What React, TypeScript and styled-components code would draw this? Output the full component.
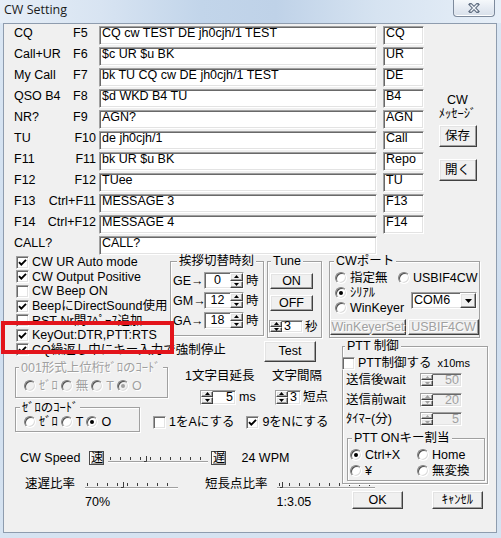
import React from 'react';
import styled, { createGlobalStyle, css } from 'styled-components';

const FONT = `"Liberation Sans", "Noto Sans CJK JP", sans-serif`;

const GlobalStyle = createGlobalStyle`
  * { box-sizing: border-box; }
  html, body { margin: 0; padding: 0; }
  body {
    width: 501px; height: 538px; overflow: hidden;
    font-family: ${FONT}; font-size: 12.5px; color: #000;
    background: #d2e0ef;
  }
`;

const sunken = css`
  border: 1px solid;
  border-color: #a0a0a0 #ffffff #ffffff #a0a0a0;
  box-shadow: inset 1px 1px 0 #696969, inset -1px -1px 0 #e3e3e3;
`;

const raised = css`
  border: 1px solid;
  border-color: #ffffff #404040 #404040 #ffffff;
  box-shadow: inset -1px -1px 0 #a0a0a0, inset 1px 1px 0 #e3e3e3;
  background: #f0f0f0;
`;

/* ---------- window chrome ---------- */
const Window = styled.div`
  width: 501px; height: 538px;
  display: flex; flex-direction: column;
  background: linear-gradient(180deg, #dbe7f4 0%, #cfdeef 55%, #d6e3f1 100%);
`;

const TitleBar = styled.div`
  height: 23px; flex: none;
  display: flex; justify-content: space-between; align-items: flex-start;
  padding: 0 6px 0 4px;
  background: linear-gradient(90deg, #e6eef7 0%, #d8e4f2 20%, #c2d5ea 40%, #bfd2e8 55%, #d6e3f1 75%, #e7eff8 100%);
`;

const Title = styled.span`
  font-family: "Open Sans", "Noto Sans", sans-serif;
  font-size: 12.5px; line-height: 16px; margin-top: 2px; color: #1b1b1b;
`;

const CloseButton = styled.div`
  width: 42px; height: 17px;
  border: 1px solid #7d8a9c; border-top: none;
  border-radius: 0 0 4px 4px;
  background: linear-gradient(180deg, #f5f8fb 0%, #e4eaf2 55%, #d8e0ea 100%);
  box-shadow: inset 0 -1px 0 #ffffff;
  display: flex; align-items: center; justify-content: center;
`;

const Client = styled.div`
  flex: 1;
  margin: 0 4px 5px 3px;
  border: 1px solid #8e9cae;
  background: #f0f0f0;
  display: flex; flex-direction: column;
`;

/* ---------- generic controls ---------- */
const Edit = styled.div<{ $w: number }>`
  ${sunken};
  width: ${p => p.$w}px; height: 19px;
  background: #fff; padding: 0 2px;
  line-height: 12px; white-space: nowrap; overflow: hidden;
`;

const Btn = styled.button<{ $w: number; $h: number; $disabled?: boolean }>`
  ${raised};
  width: ${p => p.$w}px; height: ${p => p.$h}px;
  padding: 0; margin: 0; flex: none;
  font-family: ${FONT}; font-size: 12.5px; line-height: 12px;
  color: ${p => (p.$disabled ? '#a0a0a0' : '#000')};
  text-shadow: ${p => (p.$disabled ? '1px 1px 0 #ffffff' : 'none')};
  display: flex; align-items: center; justify-content: center;
  white-space: nowrap;
`;

const Group = styled.fieldset<{ $w: number; $pad?: string }>`
  margin: 0; min-width: 0;
  width: ${p => p.$w}px;
  padding: ${p => p.$pad ?? '0'};
  border: 1px solid #a0a0a0;
  box-shadow: inset 1px 1px 0 #ffffff, 1px 1px 0 #ffffff;
`;

const Legend = styled.legend<{ $ml?: number; $disabled?: boolean }>`
  margin-left: ${p => p.$ml ?? 4}px;
  padding: 0 2px;
  line-height: 12px; font-size: 12.5px;
  background: #f0f0f0;
  white-space: nowrap;
  color: ${p => (p.$disabled ? '#a0a0a0' : '#000')};
  text-shadow: ${p => (p.$disabled ? '1px 1px 0 #ffffff' : 'none')};
`;

const CheckRow = styled.div<{ $highlight?: boolean }>`
  display: flex; align-items: center; gap: 3px;
  height: 14.6px; line-height: 14px; white-space: nowrap;
  position: relative;
  ${p =>
    p.$highlight &&
    css`
      &::after {
        content: '';
        position: absolute; left: -15px; top: -7px;
        width: 165px; height: 25px;
        border: 4px solid #e3141b;
        z-index: 2; pointer-events: none;
      }
    `}
`;

const Box = styled.span`
  ${sunken};
  flex: none; width: 13px; height: 13px; background: #fff;
  display: flex; align-items: center; justify-content: center;
`;

const Check = ({ checked, highlight, children }: { checked?: boolean; highlight?: boolean; children: React.ReactNode }) => (
  <CheckRow $highlight={highlight}>
    <Box>
      {checked && (
        <svg width="9" height="9" viewBox="0 0 9 9">
          <path d="M1 4.2 L3.3 6.6 L8 1.8" fill="none" stroke="#000" strokeWidth="1.9" />
        </svg>
      )}
    </Box>
    <span>{children}</span>
  </CheckRow>
);

const RadioItem = styled.div<{ $disabled?: boolean }>`
  display: inline-flex; align-items: center; gap: 3px;
  line-height: 14px; white-space: nowrap;
  color: ${p => (p.$disabled ? '#a0a0a0' : '#000')};
  text-shadow: ${p => (p.$disabled ? '1px 1px 0 #ffffff' : 'none')};
`;

const RadioCircle = styled.span<{ $on?: boolean; $disabled?: boolean }>`
  flex: none; width: 12px; height: 12px; border-radius: 50%;
  border: 1px solid; border-color: #808080 #ffffff #ffffff #808080;
  box-shadow: inset 1px 1px 0 #505050, inset -1px -1px 0 #dcdcdc;
  background: ${p => (p.$disabled ? '#f0f0f0' : '#fff')};
  display: flex; align-items: center; justify-content: center;
  &::after {
    content: '';
    display: ${p => (p.$on ? 'block' : 'none')};
    width: 4px; height: 4px; border-radius: 50%;
    background: ${p => (p.$disabled ? '#a0a0a0' : '#000')};
  }
`;

const Radio = ({ on, disabled, children }: { on?: boolean; disabled?: boolean; children: React.ReactNode }) => (
  <RadioItem $disabled={disabled}>
    <RadioCircle $on={on} $disabled={disabled} />
    <span>{children}</span>
  </RadioItem>
);

const SpinBox = styled.div<{ $w: number; $h: number; $disabled?: boolean }>`
  ${sunken};
  flex: none; display: flex;
  width: ${p => p.$w}px; height: ${p => p.$h}px;
  background: ${p => (p.$disabled ? '#f0f0f0' : '#fff')};
`;

const SpinCol = styled.span<{ $w: number }>`
  flex: none; width: ${p => p.$w}px;
  display: flex; flex-direction: column;
`;

const SpinHalf = styled.span`
  ${raised};
  flex: 1; min-height: 0;
  display: flex; align-items: center; justify-content: center;
`;

const SpinValue = styled.span<{ $align: string; $h: number; $disabled?: boolean }>`
  flex: 1; padding: 0 2px;
  text-align: ${p => p.$align};
  line-height: ${p => p.$h - 2}px;
  color: ${p => (p.$disabled ? '#a0a0a0' : '#000')};
`;

const Tri = ({ up, color }: { up?: boolean; color: string }) => (
  <svg width="5" height="3" viewBox="0 0 5 3">
    <path d={up ? 'M0 3H5L2.5 0Z' : 'M0 0H5L2.5 3Z'} fill={color} />
  </svg>
);

const Spin = ({ w, disabled }: { w: number; disabled?: boolean }) => (
  <SpinCol $w={w}>
    <SpinHalf><Tri up color={disabled ? '#a0a0a0' : '#000'} /></SpinHalf>
    <SpinHalf><Tri color={disabled ? '#a0a0a0' : '#000'} /></SpinHalf>
  </SpinCol>
);

const SpinField = ({
  value, w, h, side, align, disabled,
}: { value: string; w: number; h: number; side: 'left' | 'right'; align: string; disabled?: boolean }) => (
  <SpinBox $w={w} $h={h} $disabled={disabled}>
    {side === 'left' && <Spin w={12} disabled={disabled} />}
    <SpinValue $align={align} $h={h} $disabled={disabled}>{value}</SpinValue>
    {side === 'right' && <Spin w={13} disabled={disabled} />}
  </SpinBox>
);

const TrackSvg = styled.svg`
  flex: none; display: block;
`;

const Trackbar = ({ width, notch }: { width: number; notch: number }) => {
  const ticks: number[] = [];
  for (let x = 2; x < width - 1; x += 10) ticks.push(x);
  return (
    <TrackSvg width={width} height={14} viewBox={`0 0 ${width} 14`}>
      <line x1="0" y1="10.5" x2={width} y2="10.5" stroke="#a0a0a0" />
      <line x1="0" y1="11.5" x2={width} y2="11.5" stroke="#ffffff" />
      {ticks.map(x => (
        <line key={x} x1={x + 0.5} y1="6" x2={x + 0.5} y2="9" stroke="#3c3c3c" />
      ))}
      <path d={`M${notch + 0.5} 5 V10.5 M${notch - 2} 10.5 H${notch + 0.5}`} stroke="#3c3c3c" fill="none" />
    </TrackSvg>
  );
};

/* ---------- top: message list ---------- */
const TopSection = styled.div`
  display: flex;
  padding: 2px 0 0 10px;
`;

const MessageGrid = styled.div`
  display: grid;
  grid-template-columns: 85px 284px 41px;
  grid-auto-rows: 19px;
  row-gap: 2px;
`;

const LabelCell = styled.div`
  display: flex; justify-content: space-between; align-items: flex-start;
  line-height: 14px; white-space: nowrap;
`;

const KeyName = styled.span<{ $left?: boolean }>`
  ${p => (p.$left ? css`width: 26px;` : css`margin-right: 3px;`)}
`;

const SidePanel = styled.div`
  width: 67px;
  display: flex; flex-direction: column; align-items: center;
  padding-top: 67px;
`;

const SideCaption = styled.div`
  display: flex; flex-direction: column; align-items: center;
  line-height: 14px; white-space: nowrap;
`;

const SaveBtn = styled(Btn)` margin-top: 4px; `;
const OpenBtn = styled(Btn)` margin-top: 12px; `;

/* ---------- lower area ---------- */
const Lower = styled.div`
  display: flex;
`;

const LeftCol = styled.div`
  width: 324px; flex: none;
  display: flex; flex-direction: column;
`;

const RightCol = styled.div`
  flex: 1;
  display: flex; flex-direction: column; align-items: flex-start;
`;

const OptionsGrid = styled.div`
  display: grid;
  margin-left: 12px;
  grid-template-columns: 154px 97px 58px;
  align-items: start;
`;

const CheckList = styled.div`
  grid-column: 1; grid-row: 1;
  display: flex; flex-direction: column;
`;

const WideCheck = styled.div`
  grid-column: 1 / 3; grid-row: 2;
`;

const TestBtn = styled(Btn)`
  grid-column: 3; grid-row: 2;
  margin: -2px 0 0 -3px;
`;

const GreetCell = styled.div` grid-column: 2; grid-row: 1; `;
const TuneCell = styled.div` grid-column: 3; grid-row: 1; `;

const GreetRows = styled.div`
  display: flex; flex-direction: column; gap: 3px;
  margin-top: 5px;
`;

const GreetRow = styled.div`
  display: flex; align-items: center; height: 17px; line-height: 14px; white-space: nowrap;
`;

const GreetLabel = styled.span` width: 31px; flex: none; `;
const Unit = styled.span<{ $ml?: number }>`
  margin-left: ${p => p.$ml ?? 2}px; white-space: nowrap; line-height: 14px;
`;

const TuneBody = styled.div`
  display: flex; flex-direction: column; align-items: flex-start;
`;
const OnBtn = styled(Btn)` margin-top: 6px; `;
const OffBtn = styled(Btn)` margin-top: 6px; `;
const TuneSpinRow = styled.div`
  display: flex; align-items: center; margin: 9px 0 0 -1px; height: 13px;
`;

const CodeRow = styled.div`
  display: flex; align-items: flex-start;
`;

const Code001 = styled.div` margin-left: 11px; `;

const RadioLine = styled.div<{ $gap?: number }>`
  display: flex; align-items: center; gap: ${p => p.$gap ?? 3}px;
  height: 14px; margin: 5px 0 0 8px;
`;

const ParamBlock = styled.div<{ $w?: number; $ml: number }>`
  ${p => (p.$w ? `width: ${p.$w}px;` : '')}
  margin: 0 0 -6px ${p => p.$ml}px;
  display: flex; flex-direction: column;
`;

const ParamLabel = styled.div`
  line-height: 14px; margin-top: 7px; white-space: nowrap;
`;

const ParamSpinRow = styled.div<{ $indent: number }>`
  display: flex; align-items: center;
  height: 15px; margin-top: 7px; padding-left: ${p => p.$indent}px;
`;

const ZeroCode = styled.div` margin: 3px 0 0 11px; `;

const ZeroLine = styled.div`
  display: flex; align-items: center; gap: 3px;
  height: 14px; margin: 1px 0 1px 8px;
`;

const AlignCheck = styled.div<{ $ml: number }>`
  align-self: flex-end;
  margin: 0 0 2px ${p => p.$ml}px;
`;

const SpeedRow = styled.div`
  display: flex; align-items: center;
  height: 14px; margin: 19px 0 0 16px;
  line-height: 14px; white-space: nowrap;
`;

const KeyBtn = styled.span<{ $ml: number }>`
  flex: none;
  width: 15px; height: 14px; margin-left: ${p => p.$ml}px;
  border: 1px solid #4a4a4a;
  box-shadow: inset 1px 1px 0 #ffffff, inset -1px -1px 0 #a0a0a0;
  background: #f0f0f0;
  font-size: 12px; line-height: 12px;
  display: flex; align-items: center; justify-content: center;
`;

const TrackWrap = styled.span<{ $ml: number }>`
  margin-left: ${p => p.$ml}px; display: flex;
`;

const RatioRow = styled.div`
  display: flex; align-items: flex-start;
  margin: 12px 0 0 21px;
`;

const RatioBlock = styled.div<{ $ml?: number; $gap: number }>`
  display: grid;
  grid-template-columns: auto auto;
  column-gap: ${p => p.$gap}px; row-gap: 4px;
  margin-left: ${p => p.$ml ?? 0}px;
  line-height: 14px; white-space: nowrap;
`;

const RatioLabel = styled.div`
  grid-column: 1; grid-row: 1; text-align: center;
`;

const RatioValue = styled.div`
  grid-column: 2; grid-row: 2;
`;

/* right column */
const PortGroup = styled.div` margin-left: 1px; `;

const PortGrid = styled.div`
  display: grid;
  grid-template-columns: 63px 1fr;
  grid-template-rows: 15px 15.5px 15.5px;
  align-items: center;
  margin: 3px 0 0 5px;
`;

const ComboCell = styled.div`
  grid-column: 2; grid-row: 2 / 4;
  margin-left: 13px;
`;

const Combo = styled.div`
  ${sunken};
  display: flex; width: 66px; height: 17px; background: #fff;
`;

const ComboText = styled.span`
  flex: 1; padding-left: 2px; line-height: 14px;
`;

const ComboBtn = styled.span`
  ${raised};
  flex: none; width: 16px;
  display: flex; align-items: center; justify-content: center;
`;

const PortButtons = styled.div`
  display: flex; gap: 2px; margin: 3px 0 1px 0;
`;

const PttGroup = styled.div` margin: 2px 0 0 14px; `;

const PttCheck = styled.div` margin: 4px 0 0 -1px; `;

const SmallText = styled.span`
  font-size: 11px; margin-left: 6px;
`;

const WaitRow = styled.div`
  display: flex; align-items: center;
  height: 19.5px; padding-left: 3px;
  line-height: 14px; white-space: nowrap;
`;

const WaitLabel = styled.span` width: 74px; flex: none; `;

const KeyAssign = styled.div` margin: 3px 0 0 4px; `;

const AssignGrid = styled.div`
  display: grid;
  grid-template-columns: 67px 1fr;
  grid-auto-rows: 16px;
  align-items: center;
  margin: 3px 0 1px 2px;
`;

const DialogButtons = styled.div`
  display: flex; gap: 29px;
  margin: 7px 0 0 24px;
`;

type Msg = { label: string; key?: string; keyLeft?: boolean; text: string; short?: string };

const MESSAGES: Msg[] = [
  { label: 'CQ', key: 'F5', keyLeft: true, text: 'CQ cw TEST DE jh0cjh/1 TEST', short: 'CQ' },
  { label: 'Call+UR', key: 'F6', keyLeft: true, text: '$c UR $u BK', short: 'UR' },
  { label: 'My Call', key: 'F7', keyLeft: true, text: 'bk TU CQ cw DE jh0cjh/1 TEST', short: 'DE' },
  { label: 'QSO B4', key: 'F8', keyLeft: true, text: '$d WKD B4 TU', short: 'B4' },
  { label: 'NR?', key: 'F9', keyLeft: true, text: 'AGN?', short: 'AGN' },
  { label: 'TU', key: 'F10', text: 'de jh0cjh/1', short: 'Call' },
  { label: 'F11', key: 'F11', text: 'bk UR $u BK', short: 'Repo' },
  { label: 'F12', key: 'F12', text: 'TUee', short: 'TU' },
  { label: 'F13', key: 'Ctrl+F11', text: 'MESSAGE 3', short: 'F13' },
  { label: 'F14', key: 'Ctrl+F12', text: 'MESSAGE 4', short: 'F14' },
  { label: 'CALL?', text: 'CALL?' },
];

const CloseGlyph = () => (
  <svg width="12" height="10" viewBox="0 0 12 10">
    <path d="M2.5 1.5 L9.5 8.5 M9.5 1.5 L2.5 8.5" stroke="#5f6d80" strokeWidth="3.4" strokeLinecap="square" />
    <path d="M2.5 1.5 L9.5 8.5 M9.5 1.5 L2.5 8.5" stroke="#f3f6fa" strokeWidth="1.3" />
  </svg>
);

export default function App() {
  return (
    <>
      <GlobalStyle />
      <Window>
        <TitleBar>
          <Title>CW Setting</Title>
          <CloseButton>
            <CloseGlyph />
          </CloseButton>
        </TitleBar>
        <Client>
          <TopSection>
            <MessageGrid>
              {MESSAGES.map((m, i) => (
                <React.Fragment key={i}>
                  <LabelCell>
                    <span>{m.label}</span>
                    {m.key && <KeyName $left={m.keyLeft}>{m.key}</KeyName>}
                  </LabelCell>
                  <Edit $w={278}>{m.text}</Edit>
                  {m.short !== undefined ? <Edit $w={41}>{m.short}</Edit> : <span />}
                </React.Fragment>
              ))}
            </MessageGrid>
            <SidePanel>
              <SideCaption>
                <span>CW</span>
                <span>ﾒｯｾｰｼﾞ</span>
              </SideCaption>
              <SaveBtn $w={38} $h={22}>保存</SaveBtn>
              <OpenBtn $w={38} $h={22}>開く</OpenBtn>
            </SidePanel>
          </TopSection>

          <Lower>
            <LeftCol>
              <OptionsGrid>
                <CheckList>
                  <Check checked>CW UR Auto mode</Check>
                  <Check checked>CW Output Positive</Check>
                  <Check>CW Beep ON</Check>
                  <Check checked>BeepにDirectSound使用</Check>
                  <Check>RST-Nr間ｽﾍﾟｰｽ追加</Check>
                  <Check checked highlight>KeyOut:DTR,PTT:RTS</Check>
                </CheckList>
                <GreetCell>
                  <Group $w={94} $pad="0 2px 6px">
                    <Legend $ml={4}>挨拶切替時刻</Legend>
                    <GreetRows>
                      <GreetRow>
                        <GreetLabel>GE→</GreetLabel>
                        <SpinField value="0" w={40} h={17} side="right" align="center" />
                        <Unit>時</Unit>
                      </GreetRow>
                      <GreetRow>
                        <GreetLabel>GM→</GreetLabel>
                        <SpinField value="12" w={40} h={17} side="right" align="center" />
                        <Unit>時</Unit>
                      </GreetRow>
                      <GreetRow>
                        <GreetLabel>GA→</GreetLabel>
                        <SpinField value="18" w={40} h={17} side="right" align="center" />
                        <Unit>時</Unit>
                      </GreetRow>
                    </GreetRows>
                  </Group>
                </GreetCell>
                <TuneCell>
                  <Group $w={55} $pad="0 2px 4px">
                    <Legend $ml={1}>Tune</Legend>
                    <TuneBody>
                      <OnBtn $w={43} $h={16}>ON</OnBtn>
                      <OffBtn $w={43} $h={16}>OFF</OffBtn>
                      <TuneSpinRow>
                        <SpinField value="3" w={34} h={13} side="left" align="left" />
                        <Unit>秒</Unit>
                      </TuneSpinRow>
                    </TuneBody>
                  </Group>
                </TuneCell>
                <WideCheck>
                  <Check checked>CQ繰返し中にキー入力で強制停止</Check>
                </WideCheck>
                <TestBtn $w={52} $h={21}>Test</TestBtn>
              </OptionsGrid>

              <CodeRow>
                <Code001>
                  <Group $w={153} $pad="0 0 4px">
                    <Legend $ml={3} $disabled>001形式上位桁ｾﾞﾛのｺｰﾄﾞ</Legend>
                    <RadioLine>
                      <Radio disabled>ｾﾞﾛ</Radio>
                      <Radio disabled>無</Radio>
                      <Radio disabled>T</Radio>
                      <Radio disabled on>O</Radio>
                    </RadioLine>
                  </Group>
                </Code001>
                <ParamBlock $w={87} $ml={17}>
                  <ParamLabel>1文字目延長</ParamLabel>
                  <ParamSpinRow $indent={15}>
                    <SpinField value="5" w={36} h={15} side="left" align="right" />
                    <Unit $ml={3}>ms</Unit>
                  </ParamSpinRow>
                </ParamBlock>
                <ParamBlock $ml={0}>
                  <ParamLabel>文字間隔</ParamLabel>
                  <ParamSpinRow $indent={3}>
                    <SpinField value="3" w={26} h={15} side="left" align="left" />
                    <Unit $ml={2}>短点</Unit>
                  </ParamSpinRow>
                </ParamBlock>
              </CodeRow>

              <CodeRow>
                <ZeroCode>
                  <Group $w={125} $pad="0 0 1px">
                    <Legend $ml={4}>ｾﾞﾛのｺｰﾄﾞ</Legend>
                    <ZeroLine>
                      <Radio>ｾﾞﾛ</Radio>
                      <Radio>T</Radio>
                      <Radio on>O</Radio>
                    </ZeroLine>
                  </Group>
                </ZeroCode>
                <AlignCheck $ml={13}>
                  <Check>1をAにする</Check>
                </AlignCheck>
                <AlignCheck $ml={12}>
                  <Check checked>9をNにする</Check>
                </AlignCheck>
              </CodeRow>

              <SpeedRow>
                <span>CW Speed</span>
                <KeyBtn $ml={9}>速</KeyBtn>
                <TrackWrap $ml={4}>
                  <Trackbar width={100} notch={38} />
                </TrackWrap>
                <KeyBtn $ml={3}>遅</KeyBtn>
                <Unit $ml={15}>24 WPM</Unit>
              </SpeedRow>

              <RatioRow>
                <RatioBlock $gap={10}>
                  <RatioLabel>速遅比率</RatioLabel>
                  <Trackbar width={93} notch={38} />
                  <RatioValue>70%</RatioValue>
                </RatioBlock>
                <RatioBlock $ml={27} $gap={9}>
                  <RatioLabel>短長点比率</RatioLabel>
                  <Trackbar width={98} notch={5} />
                  <RatioValue>1:3.05</RatioValue>
                </RatioBlock>
              </RatioRow>
            </LeftCol>

            <RightCol>
              <PortGroup>
                <Group $w={151} $pad="0 0 1px">
                  <Legend $ml={4}>CWポート</Legend>
                  <PortGrid>
                    <Radio>指定無</Radio>
                    <Radio>USBIF4CW</Radio>
                    <Radio on>ｼﾘｱﾙ</Radio>
                    <ComboCell>
                      <Combo>
                        <ComboText>COM6</ComboText>
                        <ComboBtn>
                          <svg width="7" height="4" viewBox="0 0 7 4">
                            <path d="M0 0H7L3.5 4Z" fill="#000" />
                          </svg>
                        </ComboBtn>
                      </Combo>
                    </ComboCell>
                    <Radio>WinKeyer</Radio>
                  </PortGrid>
                  <PortButtons>
                    <Btn $w={76} $h={16} $disabled>WinKeyerSet</Btn>
                    <Btn $w={71} $h={16} $disabled>USBIF4CW</Btn>
                  </PortButtons>
                </Group>
              </PortGroup>

              <PttGroup>
                <Group $w={146} $pad="0 0 2px">
                  <Legend $ml={2}>PTT 制御</Legend>
                  <PttCheck>
                    <Check>
                      PTT制御する<SmallText>x10ms</SmallText>
                    </Check>
                  </PttCheck>
                  <WaitRow>
                    <WaitLabel>送信後wait</WaitLabel>
                    <SpinField value="50" w={42} h={14} side="left" align="right" disabled />
                  </WaitRow>
                  <WaitRow>
                    <WaitLabel>送信前wait</WaitLabel>
                    <SpinField value="20" w={42} h={14} side="left" align="right" disabled />
                  </WaitRow>
                  <WaitRow>
                    <WaitLabel>ﾀｲﾏｰ(分)</WaitLabel>
                    <SpinField value="5" w={42} h={14} side="left" align="right" disabled />
                  </WaitRow>
                  <KeyAssign>
                    <Group $w={138} $pad="0">
                      <Legend $ml={4}>PTT ONキー割当</Legend>
                      <AssignGrid>
                        <Radio on>Ctrl+X</Radio>
                        <Radio>Home</Radio>
                        <Radio>¥</Radio>
                        <Radio>無変換</Radio>
                      </AssignGrid>
                    </Group>
                  </KeyAssign>
                </Group>
              </PttGroup>

              <DialogButtons>
                <Btn $w={51} $h={18}>OK</Btn>
                <Btn $w={51} $h={18}>ｷｬﾝｾﾙ</Btn>
              </DialogButtons>
            </RightCol>
          </Lower>
        </Client>
      </Window>
    </>
  );
}
